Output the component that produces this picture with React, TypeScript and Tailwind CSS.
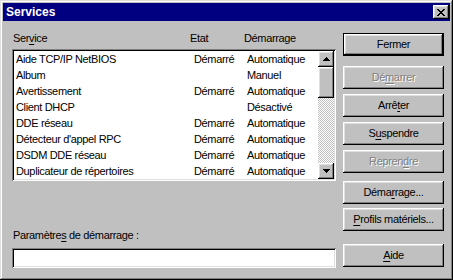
import React from "react";

const raised =
  "shadow-[inset_-1px_-1px_#000,inset_1px_1px_#fff,inset_-2px_-2px_#808080,inset_2px_2px_#dfdfdf]";
const sunken =
  "shadow-[inset_1px_1px_#808080,inset_-1px_-1px_#fff,inset_2px_2px_#000,inset_-2px_-2px_#dfdfdf]";

const rows: [string, string, string][] = [
  ["Aide TCP/IP NetBIOS", "Démarré", "Automatique"],
  ["Album", "", "Manuel"],
  ["Avertissement", "Démarré", "Automatique"],
  ["Client DHCP", "", "Désactivé"],
  ["DDE réseau", "Démarré", "Automatique"],
  ["Détecteur d'appel RPC", "Démarré", "Automatique"],
  ["DSDM DDE réseau", "Démarré", "Automatique"],
  ["Duplicateur de répertoires", "Démarré", "Automatique"],
];

function Btn({
  children,
  disabled,
  def,
  className = "",
}: {
  children: React.ReactNode;
  disabled?: boolean;
  def?: boolean;
  className?: string;
}) {
  const inner = (
    <div
      className={`h-full w-full flex items-center justify-center bg-[#c0c0c0] ${raised} ${
        disabled ? "text-[#808080] [text-shadow:1px_1px_0_#fff]" : "text-black"
      }`}
    >
      {children}
    </div>
  );
  if (def) {
    return (
      <div className={`h-[23px] w-[101px] border border-black ${className}`}>{inner}</div>
    );
  }
  return <div className={`h-[23px] w-[101px] ${className}`}>{inner}</div>;
}

const U = ({ children }: { children: React.ReactNode }) => (
  <span className="underline underline-offset-[2px]">{children}</span>
);

export default function App() {
  return (
    <div
      className="w-[453px] h-[280px] bg-[#c0c0c0] p-[3px] flex flex-col text-[11px] tracking-[-0.35px] leading-none text-black shadow-[inset_-1px_-1px_#000,inset_1px_1px_#dfdfdf,inset_-2px_-2px_#808080,inset_2px_2px_#fff]"
      style={{ fontFamily: '"Liberation Sans", Arial, sans-serif' }}
    >
      {/* Title bar */}
      <div className="h-[18px] bg-[#000080] flex items-center justify-between pl-[3px] pr-[1px]">
        <span className="text-white font-bold text-[12px] tracking-[0px]">Services</span>
        <div className={`w-[16px] h-[14px] bg-[#c0c0c0] flex items-center justify-center ${raised}`}>
          <svg width="8" height="7" viewBox="0 0 8 7" shapeRendering="crispEdges">
            <path
              d="M0 0h2v1h-2zM6 0h2v1h-2zM1 1h2v1h-2zM5 1h2v1h-2zM2 2h4v1h-4zM3 3h2v1h-2zM2 4h4v1h-4zM1 5h2v1h-2zM5 5h2v1h-2zM0 6h2v1h-2zM6 6h2v1h-2z"
              fill="#000"
            />
          </svg>
        </div>
      </div>

      {/* Body */}
      <div className="flex flex-1 pl-[9px]">
        {/* Left column */}
        <div className="w-[324px] flex flex-col">
          <div className="mt-[9px] h-[16px] flex items-center relative">
            <span className="ml-[1px]">
              Ser<U>v</U>ice
            </span>
            <span className="absolute left-[178px]">Etat</span>
            <span className="absolute left-[232px]">Démarrage</span>
          </div>
          <div className={`mt-[3px] h-[132px] bg-white p-[2px] flex ${sunken}`}>
            <div className="flex-1 flex flex-col">
              {rows.map(([n, e, d]) => (
                <div key={n} className="h-[16px] flex items-center">
                  <span className="w-[180px] pl-[2px]">{n}</span>
                  <span className="w-[53px]">{e}</span>
                  <span>{d}</span>
                </div>
              ))}
            </div>
            <div className="w-[16px] flex flex-col bg-[repeating-conic-gradient(#c0c0c0_0_25%,#fff_0_50%)] bg-[length:2px_2px]">
              <div className={`h-[16px] bg-[#c0c0c0] flex items-center justify-center ${raised}`}>
                <svg width="7" height="4" viewBox="0 0 7 4" shapeRendering="crispEdges">
                  <path d="M3 0h1v1h-1zM2 1h3v1h-3zM1 2h5v1h-5zM0 3h7v1h-7z" fill="#000" />
                </svg>
              </div>
              <div className={`h-[31px] bg-[#c0c0c0] ${raised}`} />
              <div className="flex-1" />
              <div className={`h-[16px] bg-[#c0c0c0] flex items-center justify-center ${raised}`}>
                <svg width="7" height="4" viewBox="0 0 7 4" shapeRendering="crispEdges">
                  <path d="M0 0h7v1h-7zM1 1h5v1h-5zM2 2h3v1h-3zM3 3h1v1h-1z" fill="#000" />
                </svg>
              </div>
            </div>
          </div>
          <div className="mt-[46px] h-[16px] flex items-center ml-[1px]">
            <span>
              Paramètre<U>s</U> de démarrage :
            </span>
          </div>
          <div className={`mt-[5px] h-[20px] bg-white ${sunken}`} />
        </div>

        {/* Right column */}
        <div className="ml-[7px] flex flex-col">
          <Btn def className="mt-[12px]">Fermer</Btn>
          <Btn disabled className="mt-[10px]">
            <span>
              Dé<U>m</U>arrer
            </span>
          </Btn>
          <Btn className="mt-[5px]">
            <span>
              Arrê<U>t</U>er
            </span>
          </Btn>
          <Btn className="mt-[5px]">
            <span>
              S<U>u</U>spendre
            </span>
          </Btn>
          <Btn disabled className="mt-[5px]">
            <span>
              Repren<U>d</U>re
            </span>
          </Btn>
          <Btn className="mt-[8px]">
            <span>
              Déma<U>r</U>rage...
            </span>
          </Btn>
          <Btn className="mt-[4px]">
            <span>
              <U>P</U>rofils matériels...
            </span>
          </Btn>
          <Btn className="mt-[13px]">
            <span>
              <U>A</U>ide
            </span>
          </Btn>
        </div>
      </div>
    </div>
  );
}
